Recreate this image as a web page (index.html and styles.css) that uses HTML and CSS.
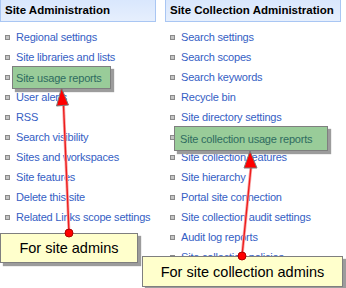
FILE: index.html
```html
<!DOCTYPE html>
<html lang="en">
<head>
    <meta charset="UTF-8">
    <title>Site Settings</title>
    <link rel="stylesheet" href="styles.css">
</head>
<body>
    <div class="page">
        <div class="columns">
            <!-- Site Administration -->
            <div class="section section-left">
                <div class="section-head">Site Administration</div>
                <ul class="links">
                    <li><a href="#">Regional settings</a></li>
                    <li><a href="#">Site libraries and lists</a></li>
                    <li><a href="#">Site usage reports</a></li>
                    <li><a href="#">User alerts</a></li>
                    <li><a href="#">RSS</a></li>
                    <li><a href="#">Search visibility</a></li>
                    <li><a href="#">Sites and workspaces</a></li>
                    <li><a href="#">Site features</a></li>
                    <li><a href="#">Delete this site</a></li>
                    <li><a href="#">Related Links scope settings</a></li>
                </ul>
            </div>
            <!-- Site Collection Administration -->
            <div class="section section-right">
                <div class="section-head">Site Collection Administration</div>
                <ul class="links">
                    <li><a href="#">Search settings</a></li>
                    <li><a href="#">Search scopes</a></li>
                    <li><a href="#">Search keywords</a></li>
                    <li><a href="#">Recycle bin</a></li>
                    <li><a href="#">Site directory settings</a></li>
                    <li><a href="#">Site collection usage reports</a></li>
                    <li><a href="#">Site collection features</a></li>
                    <li><a href="#">Site hierarchy</a></li>
                    <li><a href="#">Portal site connection</a></li>
                    <li><a href="#">Site collection audit settings</a></li>
                    <li><a href="#">Audit log reports</a></li>
                    <li><a href="#">Site collection policies</a></li>
                </ul>
            </div>
        </div>

        <!-- Callouts -->
        <div class="callout green green-site">Site usage reports</div>
        <div class="callout green green-coll">Site collection usage reports</div>
        <div class="callout note note-site">For site admins</div>
        <div class="callout note note-coll">For site collection admins</div>

        <svg class="arrows" width="346" height="288" viewBox="0 0 346 288">
            <line x1="63.5" y1="105" x2="69" y2="233" stroke="#f7a8a8" stroke-width="3"/>
            <line x1="63.5" y1="105" x2="69" y2="233" stroke="#ee1c1c" stroke-width="1.4"/>
            <polygon points="61.5,88 56.5,106 68.5,105" fill="#ff0000" stroke="#7a7a7a" stroke-width="1"/>
            <circle cx="69" cy="233" r="4" fill="#ff0000" stroke="#b00000" stroke-width="1"/>

            <line x1="251" y1="167" x2="242" y2="256" stroke="#f7a8a8" stroke-width="3"/>
            <line x1="251" y1="167" x2="242" y2="256" stroke="#ee1c1c" stroke-width="1.4"/>
            <polygon points="250,151 244,168 257,168" fill="#ff0000" stroke="#7a7a7a" stroke-width="1"/>
            <circle cx="242" cy="256" r="4" fill="#ff0000" stroke="#b00000" stroke-width="1"/>
        </svg>
    </div>
</body>
</html>
```

FILE: styles.css
```css
body {
    margin: 0;
    padding: 0;
    background: #fff;
    font-family: 'Liberation Sans', Arial, sans-serif;
}

.page {
    position: relative;
    width: 346px;
    height: 288px;
    overflow: hidden;
}

.columns {
    display: flex;
    gap: 9px;
    margin-top: -1px;
}

.section-left {
    width: 156px;
}

.section-right {
    width: 176px;
}

.section-head {
    height: 21px;
    line-height: 21px;
    padding-left: 4px;
    border: 1px solid #a9c6f3;
    background: linear-gradient(to bottom, #d9e7fd, #e6effd);
    font-size: 11.5px;
    font-weight: bold;
    color: #000;
    white-space: nowrap;
}

.links {
    list-style: none;
    margin: 5px 0 0 0;
    padding: 0;
}

.links li {
    display: flex;
    align-items: center;
    gap: 6px;
    height: 20px;
    padding-left: 5px;
    font-size: 11px;
    letter-spacing: -0.2px;
    white-space: nowrap;
}

.links li::before {
    content: "";
    width: 3px;
    height: 3px;
    border: 1px solid #8a8a8a;
    background: #c4c4c4;
    flex: none;
}

.links a {
    color: #3560c4;
    text-decoration: none;
}

.callout {
    position: absolute;
    box-sizing: border-box;
    border: 1px solid #7f7f7f;
    box-shadow: 3px 3px 1px #9c9c9c;
    white-space: nowrap;
}

.green {
    background: #99cc99;
    color: #2e6b60;
    font-size: 11px;
    letter-spacing: -0.2px;
    display: flex;
    align-items: center;
    padding-left: 3px;
}

.green-site {
    left: 12px;
    top: 66px;
    width: 99px;
    height: 23px;
}

.green-coll {
    left: 174px;
    top: 126px;
    width: 154px;
    height: 25px;
    padding-left: 5px;
}

.note {
    background: #ffffcc;
    color: #000;
    font-size: 14.5px;
    display: flex;
    align-items: center;
    justify-content: center;
}

.note-site {
    left: 0;
    top: 233px;
    width: 138px;
    height: 30px;
}

.note-coll {
    left: 142px;
    top: 256px;
    width: 201px;
    height: 31px;
}

.arrows {
    position: absolute;
    left: 0;
    top: 0;
}
```
